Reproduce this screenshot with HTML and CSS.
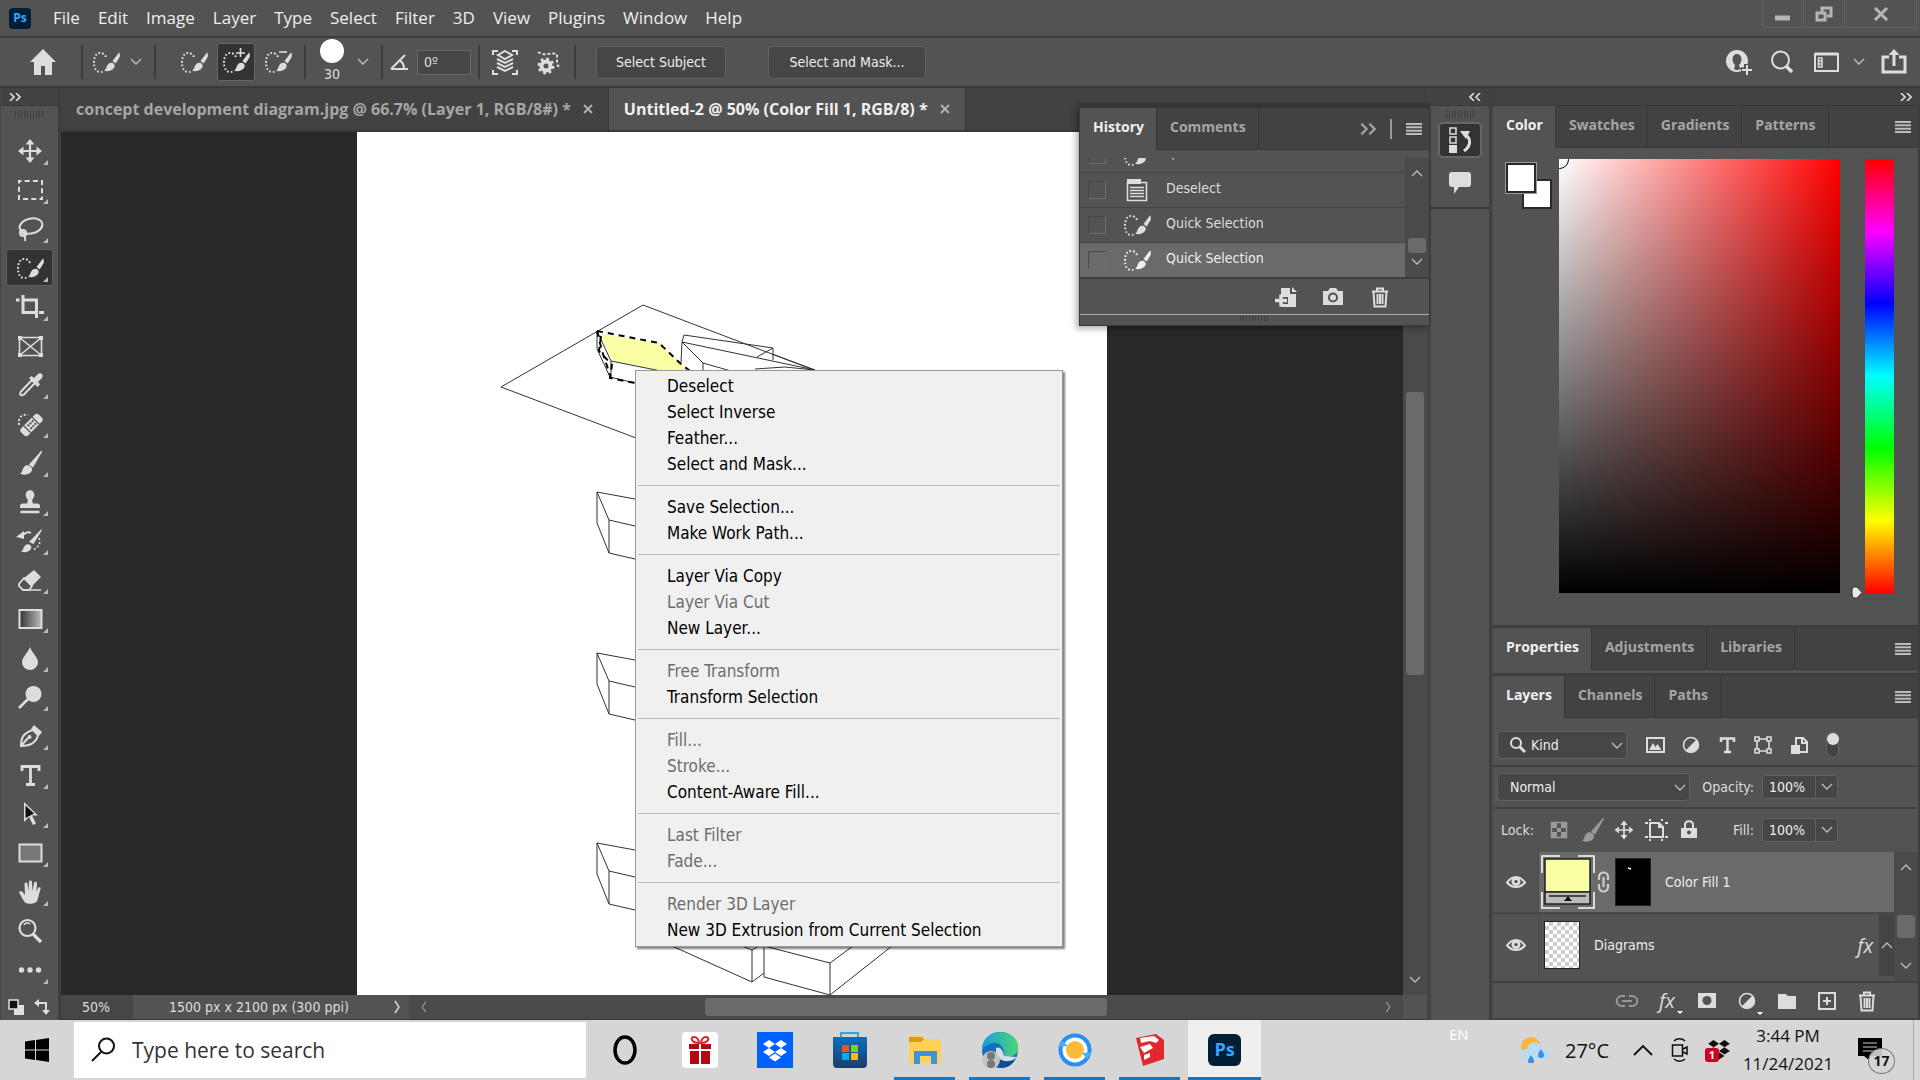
FILE: index.html
```
<!DOCTYPE html>
<html lang="en">
  <head>
    <meta charset="UTF-8" />
    <meta name="viewport" content="width=device-width, initial-scale=1.0" />
    <title>Untitled-2 @ 50% (Color Fill 1, RGB/8)</title>
    <link rel="stylesheet" href="styles.css">
  </head>
  <body>
    <!-- icon sprite -->
    <svg class="sprite" aria-hidden="true">
      <symbol id="chev-down" viewBox="0 0 12 8"><path d="M1 1l5 5 5-5" fill="none" stroke="currentColor" stroke-width="1.4"/></symbol>
      <symbol id="chev-up" viewBox="0 0 12 8"><path d="M1 7l5-5 5 5" fill="none" stroke="currentColor" stroke-width="1.4"/></symbol>
      <symbol id="chev-right" viewBox="0 0 8 14"><path d="M2 1l4 6-4 6" fill="none" stroke="currentColor" stroke-width="1.4"/></symbol>
      <symbol id="chev-left" viewBox="0 0 8 14"><path d="M6 1L2 7l4 6" fill="none" stroke="currentColor" stroke-width="1.4"/></symbol>
      <symbol id="double-right" viewBox="0 0 12 8"><path d="M1 0l4 4-4 4M7 0l4 4-4 4" fill="none" stroke="currentColor" stroke-width="1.6"/></symbol>
      <symbol id="double-left" viewBox="0 0 12 8"><path d="M5 0L1 4l4 4M11 0L7 4l4 4" fill="none" stroke="currentColor" stroke-width="1.6"/></symbol>
      <symbol id="burger" viewBox="0 0 16 12"><path d="M0 1h16M0 4.300h16M0 7.700h16M0 11h16" stroke="currentColor" stroke-width="2"/></symbol>
      <symbol id="quick" viewBox="0 0 28 28">
        <path d="M14 9c-1-3-4-4-6-4-4 0-6 4-6 9.500S4 24 8 24c2 0 3-.5 4-1" fill="none" stroke="currentColor" stroke-width="2" stroke-dasharray="1.700 2"/>
        <path d="M12 22.500c2-.5 2-3 3.500-5.500s5-3 6.500-1 .5 4.500-2.500 6-5.500 1.500-7.500.5z" fill="currentColor"/>
        <path d="M20.500 13L27 4.500c1 0 1 4 .4 5L23.600 15.500z" fill="currentColor"/>
      </symbol>
      <symbol id="brush" viewBox="0 0 28 28">
        <path d="M4 24.500c2.500-1 2-4 4-6.500s6-2 7.500.5 0 5-3.500 6.500-6 .5-8-.5z" fill="currentColor"/>
        <path d="M13 15.500L25.500 1.500 26 3 17 18.500z" fill="currentColor"/>
      </symbol>
      <symbol id="move" viewBox="0 0 28 28">
        <path d="M14 5v18M5 14h18" stroke="currentColor" stroke-width="2.200"/>
        <path d="M14 2l4.500 5.500h-9zM14 26l4.500-5.500h-9zM2 14l5.500-4.500v9zM26 14l-5.500-4.500v9z" fill="currentColor"/>
      </symbol>
      <symbol id="marquee" viewBox="0 0 28 28"><rect x="3" y="5" width="23" height="18" fill="none" stroke="currentColor" stroke-width="2" stroke-dasharray="5 3.200" stroke-dashoffset="2.500"/></symbol>
      <symbol id="lasso" viewBox="0 0 28 28"><g fill="none" stroke="currentColor" stroke-width="2"><ellipse cx="15" cy="11" rx="11.500" ry="7.500" transform="rotate(-12 15 11)"/><circle cx="7" cy="18" r="3"/><path d="M4 17c4 4 8 1 5 4-1 1 1 2 0 5"/></g></symbol>
      <symbol id="crop" viewBox="0 0 28 28"><path d="M0 7h3.500M7 2v17.500h13M23 19.500h5M8 7h12.500v18" fill="none" stroke="currentColor" stroke-width="3"/></symbol>
      <symbol id="frame" viewBox="0 0 28 28"><path d="M3.500 5.500h22v18h-22zM3.500 5.500l22 18M25.500 5.500l-22 18" fill="none" stroke="currentColor" stroke-width="1.600"/><path d="M2 4h4v4H2zM23 4h4v4h-4zM2 21h4v4H2zM23 21h4v4h-4z" fill="currentColor"/></symbol>
      <symbol id="dropper" viewBox="0 0 28 28"><path d="M16 9l3 3L8 23.500c-3 2-5 0-3-3z" fill="none" stroke="currentColor" stroke-width="2"/><path d="M13 7l2.500-2 2.500 2 4-4c3-2 6 1 4 4l-4 4 2 2.500-2.500 2.500z" fill="currentColor"/></symbol>
      <symbol id="heal" viewBox="0 0 28 28"><path d="M3 15c-1-8 3-11 9-10" fill="none" stroke="currentColor" stroke-width="2" stroke-dasharray="2 2"/><g transform="rotate(-45 15.500 15)"><rect x="3" y="10" width="25" height="10" rx="3" fill="currentColor"/><path d="M9.500 10v10M21.500 10v10" stroke="#535353" stroke-width="1.200"/><path d="M12 13h8M12 17h8" stroke="#535353" stroke-width="2" stroke-dasharray="2 1"/></g></symbol>
      <symbol id="stamp" viewBox="0 0 28 28"><path d="M14 2a5 5 0 0 1 3 8.500c-1 1-1 3 0 5h4c2 0 3 1 3 3V20H4v-1.500c0-2 1-3 3-3h4c1-2 1-4 0-5A5 5 0 0 1 14 2z" fill="currentColor"/><path d="M4.500 24h19" stroke="currentColor" stroke-width="2.500"/></symbol>
      <symbol id="history-brush" viewBox="0 0 28 28"><path d="M5 24.500c2.500-1 2-4 4-6s5-1.500 6 .5 0 4-3 5.500-5 .5-7 0zM13 15L25.500 2v2L17.500 17zM0 10l8-6v8z" fill="currentColor"/><path d="M7 8c3-3 6-3 8-2" fill="none" stroke="currentColor" stroke-width="2"/><path d="M23 11c2 5 0 9-6 12" fill="none" stroke="currentColor" stroke-width="1.600" stroke-dasharray="2 2"/></symbol>
      <symbol id="eraser" viewBox="0 0 28 28"><path d="M18 4l7 7-9 9-8-8z" fill="currentColor"/><path d="M8 12l8 8-3 4H7l-4-4v-2z" fill="none" stroke="currentColor" stroke-width="1.800"/><path d="M8 24h17" stroke="currentColor" stroke-width="1.500"/></symbol>
      <symbol id="gradient" viewBox="0 0 28 28"><linearGradient id="gr"><stop stop-color="#333"/><stop offset="1" stop-color="#bbb"/></linearGradient><rect x="3.500" y="5" width="22" height="18" fill="url(#gr)" stroke="currentColor" stroke-width="2"/></symbol>
      <symbol id="drop" viewBox="0 0 28 28"><path d="M14 3c2 6 8 10 8 15.500a8 7.500 0 0 1-16 0C6 13 12 9 14 3z" fill="currentColor"/></symbol>
      <symbol id="dodge" viewBox="0 0 28 28"><circle cx="17.500" cy="11" r="8" fill="currentColor"/><path d="M12 16l-9 9" stroke="currentColor" stroke-width="2.600"/></symbol>
      <symbol id="pen" viewBox="0 0 28 28"><path d="M5 24c0-8 2-13 12-16l5 5c-2 9-9 11-17 11zM5 24l7-8" fill="none" stroke="currentColor" stroke-width="2"/><circle cx="13.500" cy="15" r="2" fill="currentColor"/><path d="M18 3l8 7-3 4-8-7z" fill="currentColor"/></symbol>
      <symbol id="type" viewBox="0 0 28 28"><path d="M6 10V5.500h17V10M14.500 5v18M10 23.500h9" fill="none" stroke="currentColor" stroke-width="2.800"/></symbol>
      <symbol id="arrow" viewBox="0 0 28 28"><path d="M8 2v20l5-5 4 8 3-1.500-4-8h6z" fill="currentColor"/><path d="M9.500 5.500v12.500l8.500-4.500z" fill="#111"/></symbol>
      <symbol id="rect" viewBox="0 0 28 28"><rect x="3.500" y="5.500" width="22" height="17" fill="#777" stroke="currentColor" stroke-width="2"/></symbol>
      <symbol id="hand" viewBox="0 0 28 28"><path d="M9 24.500c-2-2-4-7-6-10 1-2 3-1 4 0l2 2.500L8.500 6c0-2 3-2 3 0l1 7 .5-9c0-2 3-2 3 0l.5 9 1.500-8c.5-2 3-1.500 3 .5l-.5 8.500 1.500-4c1-1.500 3-1 2.500 1l-3 11c-1 4-9 5-12.500 2.500z" fill="currentColor"/></symbol>
      <symbol id="zoom" viewBox="0 0 28 28"><circle cx="11.500" cy="11" r="8" fill="none" stroke="currentColor" stroke-width="2.200"/><path d="M8 8c1-2 4-3 6-1" fill="none" stroke="currentColor" stroke-width="1.500"/><path d="M17 17l8 8" stroke="currentColor" stroke-width="3.200"/></symbol>
      <symbol id="dots" viewBox="0 0 28 28"><g fill="currentColor"><circle cx="5.500" cy="14" r="2.700"/><circle cx="14" cy="14" r="2.700"/><circle cx="22.500" cy="14" r="2.700"/></g></symbol>
      <symbol id="trash" viewBox="0 0 28 28"><path d="M6 8.500h16M11 8V5.500h6V8M7.500 9l1 14.500h11l1-14.500M11.500 11v10M14 11v10M16.500 11v10" fill="none" stroke="currentColor" stroke-width="2"/></symbol>
      <symbol id="eye" viewBox="0 0 28 28"><path d="M5 14.500c5-7.500 13-7.500 18 0-5 6-13 6-18 0z" fill="none" stroke="currentColor" stroke-width="2"/><circle cx="14" cy="13.500" r="4.500" fill="currentColor"/><circle cx="14" cy="13.500" r="1.600" fill="#444"/></symbol>
      <symbol id="adjust" viewBox="0 0 28 28"><circle cx="14" cy="14" r="7.500" fill="none" stroke="currentColor" stroke-width="1.600"/><path d="M8.500 19.500A7.800 7.800 0 0 0 19.500 8.500z" fill="currentColor"/></symbol>
      <symbol id="dropbox" viewBox="0 0 24 22"><path d="M6 0l6 4-6 4-6-4zM18 0l6 4-6 4-6-4zM6 8l6 4-6 4-6-4zM18 8l6 4-6 4-6-4zM12 13.500l6 4-6 4-6-4z" fill="currentColor"/></symbol>
    </svg>

    <header class="title-bar">
      <span class="ps-logo">Ps</span>
      <nav class="menu-bar">
        <button>File</button>
        <button>Edit</button>
        <button>Image</button>
        <button>Layer</button>
        <button>Type</button>
        <button>Select</button>
        <button>Filter</button>
        <button>3D</button>
        <button>View</button>
        <button>Plugins</button>
        <button>Window</button>
        <button>Help</button>
      </nav>
      <div class="window-buttons">
        <button aria-label="Minimize"><svg width="16" height="16"><path d="M0 12h15" stroke="currentColor" stroke-width="5"/></svg></button>
        <button aria-label="Restore"><svg width="18" height="16"><path d="M7 6V2h9v8h-4M2 7h8v7H2z" fill="none" stroke="currentColor" stroke-width="3"/></svg></button>
        <button aria-label="Close" class="close"><svg width="16" height="14"><path d="M2 1l12 12M14 1L2 13" stroke="currentColor" stroke-width="3"/></svg></button>
      </div>
    </header>

    <div class="options-bar">
      <button class="home" aria-label="Home"><svg width="26" height="26"><path d="M13 0L0 13h4v13h7v-9h4v9h7V13h4z" fill="currentColor"/></svg></button>
      <div class="option-group preset">
        <svg class="icon"><use href="#quick"/></svg>
        <svg class="chev"><use href="#chev-down"/></svg>
      </div>
      <div class="option-group modes">
        <button aria-label="New selection"><svg class="icon"><use href="#quick"/></svg></button>
        <button aria-label="Add to selection" class="active"><svg class="icon"><use href="#quick"/><path d="M14 5h9M18.500 0v9" stroke="currentColor" stroke-width="1.600"/></svg></button>
        <button aria-label="Subtract from selection"><svg class="icon"><use href="#quick"/><path d="M15 4h8" stroke="currentColor" stroke-width="1.600"/></svg></button>
      </div>
      <div class="option-group brush-size">
        <div class="brush-preview"><i></i><span>30</span></div>
        <svg class="chev"><use href="#chev-down"/></svg>
      </div>
      <div class="option-group angle">
        <label for="angle" aria-label="Angle"><svg width="20" height="18"><path d="M2 16h17M2 16L16 2M10 7c4 2 5 5 5 9" fill="none" stroke="currentColor" stroke-width="2"/></svg></label>
        <input id="angle" type="text" value="0º">
      </div>
      <div class="option-group sampling">
        <svg class="icon" viewBox="0 0 28 28"><path d="M2 7V3h5M21 3h5v4M2 22v4h5M21 26h5v-4" fill="none" stroke="currentColor" stroke-width="2"/><path d="M14 3l7 4-7 4-7-4zM6 11l8 4 8-4M6 15l8 4 8-4M6 19l8 4 8-4" fill="none" stroke="currentColor" stroke-width="2"/></svg>
        <svg class="icon" viewBox="0 0 28 28"><circle cx="10" cy="18" r="4.500" fill="none" stroke="currentColor" stroke-width="4"/><circle cx="10" cy="18" r="7" fill="none" stroke="currentColor" stroke-width="3" stroke-dasharray="2.700 2.800"/><path d="M2 4c8 5 10 0 19 2v9c0 3 2 4 4 4" fill="none" stroke="currentColor" stroke-width="2" stroke-dasharray="3 2"/></svg>
      </div>
      <button class="big-btn">Select Subject</button>
      <button class="big-btn mask-btn">Select and Mask...</button>
      <div class="share-tools">
        <button aria-label="Invite"><svg class="icon" viewBox="0 0 28 28"><circle cx="13" cy="13" r="10" fill="none" stroke="currentColor" stroke-width="2"/><path d="M13 3C5 3 1 10 4 16c1 3 4 5 6 6l1-5C7 13 8 6 13 6s6 7 2 11l1 3 5-1C26 12 22 3 13 3z" fill="currentColor"/><path d="M17 22h11M22.500 16v12" stroke="#535353" stroke-width="5"/><path d="M18 22h10M23 17v10" stroke="currentColor" stroke-width="2"/></svg></button>
        <button aria-label="Search"><svg class="icon" viewBox="0 0 28 28"><circle cx="12.500" cy="12" r="8.500" fill="none" stroke="currentColor" stroke-width="2"/><path d="M18 18l6 6" stroke="currentColor" stroke-width="3.500"/></svg></button>
        <button aria-label="Workspace" class="workspace-btn"><svg class="icon" viewBox="0 0 28 28"><path d="M3 6h23v17H3z" fill="none" stroke="currentColor" stroke-width="2"/><path d="M3 6h23" stroke="currentColor" stroke-width="3"/><path d="M6.500 10h3.500v9H6.500zM6.500 13h3M6.500 16h3" fill="none" stroke="currentColor" stroke-width="1.500"/></svg><svg class="chev"><use href="#chev-down"/></svg></button>
        <button aria-label="Share"><svg class="icon" viewBox="0 0 28 28"><path d="M9 9H3v15h22V9h-6" fill="none" stroke="currentColor" stroke-width="3"/><path d="M14 6v12" stroke="currentColor" stroke-width="3"/><path d="M14 1l5.500 6h-11z" fill="currentColor"/></svg></button>
      </div>
    </div>

    <main class="workspace">
      <aside class="toolbox">
        <div class="dock-head"><svg class="double"><use href="#double-right"/></svg></div>
        <div class="grip"></div>
        <div class="tools">
          <button aria-label="Move"><svg class="icon"><use href="#move"/></svg></button>
          <button aria-label="Marquee"><svg class="icon"><use href="#marquee"/></svg></button>
          <button aria-label="Lasso"><svg class="icon"><use href="#lasso"/></svg></button>
          <button aria-label="Quick selection" class="active"><svg class="icon"><use href="#quick"/></svg></button>
          <button aria-label="Crop"><svg class="icon"><use href="#crop"/></svg></button>
          <button aria-label="Frame" class="single"><svg class="icon"><use href="#frame"/></svg></button>
          <button aria-label="Eyedropper"><svg class="icon"><use href="#dropper"/></svg></button>
          <button aria-label="Healing brush"><svg class="icon"><use href="#heal"/></svg></button>
          <button aria-label="Brush"><svg class="icon"><use href="#brush"/></svg></button>
          <button aria-label="Clone stamp"><svg class="icon"><use href="#stamp"/></svg></button>
          <button aria-label="History brush"><svg class="icon"><use href="#history-brush"/></svg></button>
          <button aria-label="Eraser"><svg class="icon"><use href="#eraser"/></svg></button>
          <button aria-label="Gradient"><svg class="icon"><use href="#gradient"/></svg></button>
          <button aria-label="Blur"><svg class="icon"><use href="#drop"/></svg></button>
          <button aria-label="Dodge"><svg class="icon"><use href="#dodge"/></svg></button>
          <button aria-label="Pen"><svg class="icon"><use href="#pen"/></svg></button>
          <button aria-label="Type tool"><svg class="icon"><use href="#type"/></svg></button>
          <button aria-label="Path selection"><svg class="icon"><use href="#arrow"/></svg></button>
          <button aria-label="Rectangle"><svg class="icon"><use href="#rect"/></svg></button>
          <button aria-label="Hand"><svg class="icon"><use href="#hand"/></svg></button>
          <button aria-label="Zoom" class="single"><svg class="icon"><use href="#zoom"/></svg></button>
          <button aria-label="Edit toolbar"><svg class="icon"><use href="#dots"/></svg></button>
        </div>
        <div class="tool-colors">
          <svg width="16" height="16"><path d="M6 6h10v10H6z" fill="#e0e0e0"/><path d="M1 1h9v9H1z" fill="#111" stroke="#e0e0e0" stroke-width="1.500"/></svg>
          <svg width="16" height="16"><path d="M4 4h8v8" fill="none" stroke="currentColor" stroke-width="2"/><path d="M0 4l5-4v8zM12 16l-4-5h8z" fill="currentColor"/></svg>
        </div>
      </aside>

      <section class="document">
        <div class="doc-tabs">
          <div class="doc-tab"><span>concept development diagram.jpg @ 66.7% (Layer 1, RGB/8#) *</span><button aria-label="Close tab"><svg width="10" height="10"><path d="M1 1l8 8M9 1L1 9" stroke="currentColor" stroke-width="2"/></svg></button></div>
          <div class="doc-tab active"><span>Untitled-2 @ 50% (Color Fill 1, RGB/8) *</span><button aria-label="Close tab"><svg width="10" height="10"><path d="M1 1l8 8M9 1L1 9" stroke="currentColor" stroke-width="2"/></svg></button></div>
        </div>
        <div class="canvas-row">
          <div class="canvas">
            <svg class="artboard" viewBox="357 132 750 863" preserveAspectRatio="xMidYMin slice">
              <g class="lines">
                <path d="M636 438L501 387 643 305l171 65"/>
                <path d="M597 331v18l13 28 25 6M597 331l14 30v16"/>
                <path class="yellow" d="M600 334l59 9 22 20 9 8h-30l-48-10z"/>
                <path d="M611 361l50 10"/>
                <path d="M681 363l1-21 2-7 89 13v12M682 342l133 28M757 357l16-9M682 342l21 21v8M703 363l28 8M755 369l30-2 30 3M772 354l43 16"/>
                <g id="box"><path d="M635 499l-38-7v31l12 30 26 6M597 492l12 28 26 6M609 520v33"/></g>
                <use href="#box" y="161"/>
                <use href="#box" y="351"/>
                <path d="M672 946l80 36 12-9M742 946l10 4v32M752 950l7-4M764 946v31l66 18 62-49M764 946l66 17v32M830 963l23-17"/>
              </g>
              <g class="ants">
                <path d="M597 331l62 12 22 21 9 7M597 331l5 20 8 24M601 336l-2 15 13 14-2 13 25 5"/>
              </g>
            </svg>
          </div>
          <div class="scrollbar v-scroll">
            <span class="thumb"></span>
            <svg class="chev"><use href="#chev-down"/></svg>
          </div>
        </div>
        <div class="status-bar">
          <span class="zoom-level">50%</span>
          <span class="doc-info">1500 px x 2100 px (300 ppi)<svg width="8" height="16"><use href="#chev-right"/></svg></span>
          <div class="h-scroll">
            <svg width="8" height="12"><use href="#chev-left"/></svg>
            <span class="thumb"></span>
            <svg width="8" height="12"><use href="#chev-right"/></svg>
          </div>
          <span class="corner"></span>
        </div>

        <!-- floating history panel -->
        <div class="history">
          <div class="tabs">
            <button class="tab active">History</button>
            <button class="tab">Comments</button>
            <span class="tab-tools"><svg width="16" height="12"><use href="#double-right"/></svg><i></i><svg class="burger"><use href="#burger"/></svg></span>
          </div>
          <div class="history-body">
            <ul class="history-list">
              <li><input type="checkbox" id="h0"><svg class="icon"><use href="#quick"/></svg><label for="h0">Quick Selection</label></li>
              <li><input type="checkbox" id="h1"><svg class="icon" viewBox="0 0 28 28"><path d="M4 3h14v5H4z" fill="currentColor"/><path d="M4.500 6.500h19v18h-19zM7 11.500h14M7 14.500h14M7 17.500h14M7 20.500h14" fill="none" stroke="currentColor" stroke-width="1.600"/></svg><label for="h1">Deselect</label></li>
              <li><input type="checkbox" id="h2"><svg class="icon"><use href="#quick"/></svg><label for="h2">Quick Selection</label></li>
              <li class="selected"><input type="checkbox" id="h3"><svg class="icon"><use href="#quick"/></svg><label for="h3">Quick Selection</label></li>
            </ul>
            <div class="scrollbar">
              <svg class="chev"><use href="#chev-up"/></svg>
              <span class="thumb"></span>
              <svg class="chev"><use href="#chev-down"/></svg>
            </div>
          </div>
          <div class="history-foot">
            <button aria-label="New document from state"><svg class="icon" viewBox="0 0 28 28"><path d="M9 5h9v6h6v13H9v-3h7v-7H9zM20 4l5 5h-5z" fill="currentColor"/><path d="M3 17.500h12M9 11.500v12" stroke="currentColor" stroke-width="3.500"/></svg></button>
            <button aria-label="New snapshot"><svg class="icon" viewBox="0 0 28 28"><path d="M4 8h5l2-3h6l2 3h5v14H4z" fill="currentColor"/><circle cx="14" cy="14.500" r="4" fill="none" stroke="#535353" stroke-width="2"/></svg></button>
            <button aria-label="Delete state"><svg class="icon"><use href="#trash"/></svg></button>
          </div>
          <div class="resize"></div>
        </div>

        <!-- canvas right-click menu -->
        <div class="context-menu" role="menu">
          <button role="menuitem">Deselect</button>
          <button role="menuitem">Select Inverse</button>
          <button role="menuitem">Feather...</button>
          <button role="menuitem">Select and Mask...</button>
          <hr>
          <button role="menuitem">Save Selection...</button>
          <button role="menuitem">Make Work Path...</button>
          <hr>
          <button role="menuitem">Layer Via Copy</button>
          <button role="menuitem" disabled>Layer Via Cut</button>
          <button role="menuitem">New Layer...</button>
          <hr>
          <button role="menuitem" disabled>Free Transform</button>
          <button role="menuitem">Transform Selection</button>
          <hr>
          <button role="menuitem" disabled>Fill...</button>
          <button role="menuitem" disabled>Stroke...</button>
          <button role="menuitem">Content-Aware Fill...</button>
          <hr>
          <button role="menuitem" disabled>Last Filter</button>
          <button role="menuitem" disabled>Fade...</button>
          <hr>
          <button role="menuitem" disabled>Render 3D Layer</button>
          <button role="menuitem">New 3D Extrusion from Current Selection</button>
        </div>
      </section>

      <aside class="icon-dock">
        <div class="dock-head"><svg class="double"><use href="#double-left"/></svg></div>
        <div class="dock-icons">
          <div class="grip"></div>
          <button aria-label="History" class="active"><svg class="icon" viewBox="0 0 28 28"><path d="M4 2h6v6H4zM4 11h6v6H4z" fill="none" stroke="currentColor" stroke-width="1.500"/><path d="M3 19h8v8H3zM14 5l10 0-4 8z" fill="currentColor"/><path d="M18 8c8 4 7 12 0 17" fill="none" stroke="currentColor" stroke-width="3"/></svg></button>
          <button aria-label="Comments"><svg class="icon" viewBox="0 0 28 28"><path d="M6 3h16a3 3 0 0 1 3 3v9a3 3 0 0 1-3 3H13l-5 7V18H6a3 3 0 0 1-3-3V6a3 3 0 0 1 3-3z" fill="currentColor"/></svg></button>
        </div>
      </aside>

      <aside class="panels">
        <div class="dock-head"><svg class="double"><use href="#double-right"/></svg></div>
        <section class="panel color-panel">
          <div class="tabs">
            <button class="tab active">Color</button>
            <button class="tab">Swatches</button>
            <button class="tab">Gradients</button>
            <button class="tab">Patterns</button>
            <span class="tab-tools"><svg class="burger"><use href="#burger"/></svg></span>
          </div>
          <div class="color-body">
            <div class="swatches"><i class="back"></i><i class="front"></i></div>
            <div class="color-field"><i class="picker"></i></div>
            <div class="hue"><svg class="hue-marker" width="12" height="13"><path d="M2 1h4l5 5.500L6 12H2L1 8V4z" fill="#e8e8e8" stroke="#333"/></svg></div>
          </div>
        </section>
        <section class="panel properties-panel">
          <div class="tabs">
            <button class="tab active">Properties</button>
            <button class="tab">Adjustments</button>
            <button class="tab">Libraries</button>
            <span class="tab-tools"><svg class="burger"><use href="#burger"/></svg></span>
          </div>
        </section>
        <section class="panel layers-panel">
          <div class="tabs">
            <button class="tab active">Layers</button>
            <button class="tab">Channels</button>
            <button class="tab">Paths</button>
            <span class="tab-tools"><svg class="burger"><use href="#burger"/></svg></span>
          </div>
          <div class="layer-row filter-row">
            <div class="select kind">
              <svg class="find" viewBox="0 0 16 16"><circle cx="6" cy="6" r="5" fill="none" stroke="currentColor" stroke-width="2"/><path d="M9.500 9.500L15 15" stroke="currentColor" stroke-width="3"/></svg>
              <select aria-label="Filter layers"><option>Kind</option></select>
              <svg class="chev"><use href="#chev-down"/></svg>
            </div>
            <div class="filters">
              <button aria-label="Pixel layers"><svg class="icon" viewBox="0 0 28 28"><path d="M6 7h17v14H6z" fill="none" stroke="currentColor" stroke-width="2"/><path d="M8 19l4-7 2.500 4 2-3 4 6z" fill="currentColor"/></svg></button>
              <button aria-label="Adjustment layers"><svg class="icon"><use href="#adjust"/></svg></button>
              <button aria-label="Type layers"><svg class="icon" viewBox="0 0 28 28"><path d="M8 11V7.500h13V11M14.500 7v14M11 21h7" fill="none" stroke="currentColor" stroke-width="2.500"/></svg></button>
              <button aria-label="Shape layers"><svg class="icon" viewBox="0 0 28 28"><g fill="none" stroke="currentColor" stroke-width="1.600"><path d="M8 8h12v12H8z"/><path d="M6 6h4v4H6zM18 6h4v4h-4zM6 18h4v4H6zM18 18h4v4h-4z" fill="#535353"/></g></svg></button>
              <button aria-label="Smart objects"><svg class="icon" viewBox="0 0 28 28"><path d="M11 14V7h7l4 4v10h-7M17 7v5h5" fill="none" stroke="currentColor" stroke-width="2"/><path d="M6 14h9v9H6z" fill="currentColor"/></svg></button>
              <button aria-label="Toggle filter" class="toggle"></button>
            </div>
          </div>
          <div class="layer-row blend-row">
            <div class="select blend">
              <select aria-label="Blend mode"><option>Normal</option></select>
              <svg class="chev"><use href="#chev-down"/></svg>
            </div>
            <label for="opacity">Opacity:</label>
            <div class="number"><input id="opacity" type="text" value="100%"><button aria-label="Opacity slider"><svg class="chev"><use href="#chev-down"/></svg></button></div>
          </div>
          <div class="layer-row lock-row">
            <span class="lock-label">Lock:</span>
            <div class="locks">
              <button aria-label="Lock transparency" class="dim"><svg class="icon" viewBox="0 0 28 28"><path d="M6.500 6.500h15v15h-15z" fill="none" stroke="currentColor" stroke-width="1.500"/><path d="M7 7h5v5H7zM16 7h5v5h-5zM12 12h4v4h-4zM7 16h5v5H7zM16 16h5v5h-5z" fill="currentColor"/></svg></button>
              <button aria-label="Lock pixels" class="dim"><svg class="icon"><use href="#brush"/></svg></button>
              <button aria-label="Lock position"><svg class="icon small"><use href="#move"/></svg></button>
              <button aria-label="Lock artboard"><svg class="icon" viewBox="0 0 28 28"><path d="M8 7h9l4 4v10H8zM17 7v4h4" fill="none" stroke="currentColor" stroke-width="2"/><path d="M3 7h3M23 7h3M3 21h3M23 21h3M8 3v2M20 3v2M8 23v2M20 23v2" stroke="currentColor" stroke-width="2"/></svg></button>
              <button aria-label="Lock all"><svg class="icon" viewBox="0 0 28 28"><path d="M10 13V9c0-5 8-5 8 0v4" fill="none" stroke="currentColor" stroke-width="2"/><path d="M6 12h16v10H6z" fill="currentColor"/><circle cx="14" cy="16.500" r="2" fill="#535353"/></svg></button>
            </div>
            <label for="fill">Fill:</label>
            <div class="number"><input id="fill" type="text" value="100%"><button aria-label="Fill slider"><svg class="chev"><use href="#chev-down"/></svg></button></div>
          </div>
          <div class="layers">
            <ul class="layer-list">
              <li class="layer selected">
                <button class="eye" aria-label="Hide Color Fill 1"><svg class="icon"><use href="#eye"/></svg></button>
                <div class="layer-main">
                  <svg class="fill-thumb" width="54" height="54"><path d="M1 18V1h18M37 1h16v17M53 37v16H37M19 53H1V37" fill="none" stroke="#fff" stroke-width="1.500"/><rect x="4" y="4" width="45" height="33" fill="#f9ffa5" stroke="#222" stroke-width="1.500"/><rect x="4" y="37" width="45" height="12" fill="#bbb" stroke="#222" stroke-width="1.500"/><path d="M8 41h37" stroke="#222" stroke-width="1.500"/><path d="M27 41l4 5h-8z" fill="#111"/></svg>
                  <svg class="link" width="13" height="22"><path d="M2 9V6c0-6 9-6 9 0v3M2 13v3c0 6 9 6 9 0v-3M6.500 6v10" fill="none" stroke="#ccc" stroke-width="2.200"/></svg>
                  <svg width="36" height="48"><rect x=".5" y=".5" width="35" height="47" stroke="#222"/><path d="M13 10l3 1" stroke="#fff" stroke-width="1.500"/></svg>
                  <span>Color Fill 1</span>
                </div>
              </li>
              <li class="layer">
                <button class="eye" aria-label="Hide Diagrams"><svg class="icon"><use href="#eye"/></svg></button>
                <div class="layer-main">
                  <i class="checker"></i>
                  <span>Diagrams</span>
                  <em>fx</em>
                  <button class="expand" aria-label="Collapse effects"><svg class="chev"><use href="#chev-up"/></svg></button>
                </div>
              </li>
            </ul>
            <div class="scrollbar">
              <svg class="chev"><use href="#chev-up"/></svg>
              <span class="thumb"></span>
              <svg class="chev"><use href="#chev-down"/></svg>
            </div>
          </div>
          <div class="layers-foot">
            <button aria-label="Link layers" class="dim"><svg class="icon" viewBox="0 0 28 28"><path d="M12 9H9c-7 0-7 10 0 10h3M16 9h3c7 0 7 10 0 10h-3M9 14h10" fill="none" stroke="currentColor" stroke-width="2"/></svg></button>
            <button aria-label="Layer style"><em>fx</em><i class="more"></i></button>
            <button aria-label="Add mask"><svg class="icon" viewBox="0 0 28 28"><path d="M5 6h18v15H5z" fill="currentColor"/><circle cx="14" cy="13.500" r="4.500" fill="#535353"/></svg></button>
            <button aria-label="New adjustment layer"><svg class="icon"><use href="#adjust"/></svg><i class="more"></i></button>
            <button aria-label="New group"><svg class="icon" viewBox="0 0 28 28"><path d="M5 7h8l2 2h8v13H5z" fill="currentColor"/></svg></button>
            <button aria-label="New layer"><svg class="icon" viewBox="0 0 28 28"><path d="M6 6h16v16H6zM14 10v8M10 14h8" fill="none" stroke="currentColor" stroke-width="2"/></svg></button>
            <button aria-label="Delete layer"><svg class="icon"><use href="#trash"/></svg></button>
          </div>
        </section>
      </aside>
    </main>

    <footer class="taskbar">
      <button class="start" aria-label="Start"><svg width="24" height="24"><path d="M0 3.500L10 2v9.500H0zM11 2l13-2v11.500H11zM0 12.500h10V22L0 20.500zM11 12.500h13V24l-13-2z"/></svg></button>
      <div class="search">
        <svg width="24" height="26"><circle cx="15.500" cy="9" r="7.500" fill="none" stroke="#111" stroke-width="2"/><path d="M10 15L1 24" stroke="#111" stroke-width="2"/></svg>
        <input type="text" placeholder="Type here to search" aria-label="Type here to search">
      </div>
      <nav class="apps">
        <button aria-label="Cortana"><svg width="26" height="32"><ellipse cx="13" cy="16" rx="10" ry="13" fill="none" stroke="#000" stroke-width="3.500"/></svg></button>
        <button aria-label="Rewards"><svg width="36" height="36"><rect width="36" height="36" rx="4" fill="#fff"/><path d="M7 12h10v5H7zM19 12h10v5H19zM8 19h9v13H8zM19 19h9v13h-9z" fill="#b3080e"/><path d="M17 11c-8 0-9-6-5-6 3 0 5 3 5 6zM19 11c8 0 9-6 5-6-3 0-5 3-5 6z" fill="none" stroke="#d9262c" stroke-width="2"/></svg></button>
        <button aria-label="Dropbox"><svg width="36" height="36"><path d="M0 0h36v36H0z" fill="#0061fe"/><svg x="6" y="8" width="24" height="22" color="#fff"><use href="#dropbox"/></svg></svg></button>
        <button aria-label="Store"><svg width="36" height="38"><linearGradient id="st" x2="0" y2="1"><stop stop-color="#0c6fb8"/><stop offset="1" stop-color="#1c3d6b"/></linearGradient><path d="M9 7V2h17v5" fill="none" stroke="#2ba7e4" stroke-width="2"/><path d="M1 6h34v27a4 4 0 0 1-4 4H5a4 4 0 0 1-4-4z" fill="url(#st)"/><path d="M10 14h7v7h-7z" fill="#f1511b"/><path d="M19 14h7v7h-7z" fill="#80cc28"/><path d="M10 22h7v7h-7z" fill="#00adef"/><path d="M19 22h7v7h-7z" fill="#fbbc09"/></svg></button>
        <button aria-label="Explorer" class="open"><svg width="34" height="28"><path d="M1 2a2 2 0 0 1 2-2h11l3 3h14a2 2 0 0 1 2 2v22H1z" fill="#ffd058"/><path d="M1 5V1h12l3 2-3 3H1z" fill="#dd9b12"/><path d="M6 28V15h23v13h-6v-8H12v8z" fill="#3b94d9"/></svg></button>
        <button aria-label="Edge" class="open"><svg width="36" height="36"><linearGradient id="ed"><stop stop-color="#1a9be0"/><stop offset="1" stop-color="#4bd673"/></linearGradient><circle cx="18" cy="18" r="18" fill="#1470bd"/><path d="M0 19C0 5 10 0 19 0c11 0 19 9 17 18-1 6-9 8-14 6 1-7-3-13-9-13S2 14 0 19z" fill="url(#ed)"/><path d="M14 22c0 6 7 9 19 6-3 5-8 8-14 8-6-2-8-9-5-14z" fill="#0f4b93"/><path d="M14 16c4-2 7 2 8 8l13 1-4 3c-8 3-15 0-17-7z" fill="#d8dde0"/><circle cx="9" cy="28" r="9" fill="#c4c4c4"/><circle cx="9" cy="24" r="4" fill="#777"/><circle cx="9" cy="32" r="4" fill="#777"/></svg></button>
        <button aria-label="Sync" class="open"><svg width="34" height="34"><circle cx="17" cy="17" r="14.500" fill="#fff" stroke="#2c8ef0" stroke-width="4"/><circle cx="17" cy="17" r="9" fill="#ffb938"/><path d="M0 14l4-6 6 5zM34 19l-5 7-5-6z" fill="#45b3f7"/></svg></button>
        <button aria-label="SketchUp" class="open"><svg width="30" height="34"><path d="M1 5L21 1l8 6v19L8 33z" fill="#e2272d"/><path d="M5 5l14-2 5 4-3 3-6-2-9 2zM5 14l10-3 3 4-9 5zM9 22l6-2v4l-6 3z" fill="#fff"/></svg></button>
        <button aria-label="Photoshop" class="open current"><span class="ps-logo large">Ps</span></button>
      </nav>
      <span class="lang">EN</span>
      <div class="tray">
        <button class="weather"><svg width="32" height="26"><circle cx="12" cy="10" r="10" fill="#f6b73c"/><path d="M8 22C-2 22 0 11 8 12c2-9 15-8 15 0 10-1 11 10 2 10z" fill="#b9dcf6"/><path d="M12 18c2 3 3 4 3 6a3 3 0 0 1-6 0c0-2 1-3 3-6zM22 12c2 3 3 4 3 6a3 3 0 0 1-6 0c0-2 1-3 3-6z" fill="#3b8fe0"/></svg><span>27°C</span></button>
        <button aria-label="Show hidden icons"><svg width="20" height="12"><path d="M1 11l9-9 9 9" fill="none" stroke="#111" stroke-width="1.800"/></svg></button>
        <button aria-label="Meet now"><svg width="18" height="24"><path d="M1.500 7h10v11h-10zM12 11l4-2v7l-4-2M3 3c3-3 8-3 11 0M3 21c3 3 8 3 11 0" fill="none" stroke="#111" stroke-width="1.500"/></svg></button>
        <button aria-label="Dropbox, 1 notification" class="tray-dropbox"><svg width="24" height="20"><use href="#dropbox"/></svg><b>1</b></button>
        <div class="clock"><span>3:44 PM</span><span>11/24/2021</span></div>
        <button aria-label="Notifications" class="notify"><svg width="24" height="24"><path d="M0 0h24v18H12v5l-6-5H0z"/><path d="M5 5h14M5 9h14M5 13h14" stroke="#ccc" stroke-width="1.200"/></svg><b>17</b></button>
      </div>
    </footer>
  </body>
</html>
```

FILE: styles.css
```
* {
  margin: 0;
  padding: 0;
  box-sizing: border-box;
}

body {
  font-family: "DejaVu Sans Condensed", "Noto Sans", sans-serif;
  font-size: 14px;
  color: #ddd;
  background: #535353;
  display: flex;
  flex-direction: column;
  height: 100vh;
  overflow: hidden;
}

button,
input,
select {
  font: inherit;
  color: inherit;
  background: none;
  border: none;
  border-radius: 0;
  outline: none;
}

button {
  display: flex;
  align-items: center;
  justify-content: center;
}

ul {
  list-style: none;
}

svg {
  display: block;
  flex: none;
}

.sprite {
  position: absolute;
  width: 0;
  height: 0;
}

.icon {
  width: 28px;
  height: 28px;
}

.icon.small {
  width: 22px;
  height: 22px;
  margin: 0 2px;
}

.chev {
  width: 12px;
  height: 8px;
  color: #bbb;
}

.double {
  width: 12px;
  height: 8px;
}

.burger {
  width: 16px;
  height: 12px;
  color: #bbb;
}

.dim {
  color: #999;
}

/* title bar */
.title-bar {
  display: flex;
  flex: none;
  align-items: center;
  height: 37px;
  padding-left: 9px;
  border-bottom: 1px solid #383838;
}

.ps-logo {
  width: 22px;
  height: 21px;
  border-radius: 4px;
  background: #001e36;
  color: #31a8ff;
  font: bold 12px/20px "Open Sans", sans-serif;
  text-align: center;
}

.menu-bar {
  display: flex;
  flex: 1;
  gap: 18px;
  margin-left: 22px;
  font-family: "Open Sans", sans-serif;
  font-size: 17px;
  line-height: 22px;
  color: #eee;
}

.window-buttons {
  display: flex;
  align-self: flex-start;
  height: 28px;
  margin-right: 3px;
  border: 1px solid #626262;
  border-top: none;
  border-radius: 0 0 4px 4px;
  color: #b5b5b5;
}

.window-buttons button {
  width: 41px;
  border-right: 1px solid #626262;
}

.window-buttons .close {
  width: 71px;
  border-right: none;
}

/* tool options */
.options-bar {
  display: flex;
  flex: none;
  align-items: center;
  height: 51px;
  border-top: 1px solid #444;
  border-bottom: 2px solid #3a3a3a;
}

.home {
  width: 81px;
  padding-left: 4px;
}

.option-group {
  display: flex;
  align-items: center;
  height: 34px;
  border-left: 2px solid #3c3c3c;
}

.preset {
  gap: 10px;
  width: 73px;
  padding-left: 9px;
}

.modes {
  gap: 4px;
  width: 150px;
  padding-left: 19px;
}

.modes button {
  width: 38px;
  height: 38px;
}

.modes .active {
  background: #333;
  border: 1px solid #666;
  border-radius: 3px;
}

.brush-size {
  gap: 13px;
  width: 77px;
  padding-left: 14px;
}

.brush-preview {
  display: flex;
  flex-direction: column;
  align-items: center;
}

.brush-preview i {
  width: 24px;
  height: 24px;
  border-radius: 50%;
  background: #fff;
}

.brush-preview span {
  line-height: 22px;
}

.angle {
  gap: 8px;
  width: 97px;
  padding-left: 6px;
}

.angle input {
  width: 54px;
  height: 25px;
  padding-left: 6px;
  background: #464646;
  border: 1px solid #6a6a6a;
}

.sampling {
  gap: 17px;
  width: 98px;
  padding-left: 11px;
  border-right: 2px solid #3c3c3c;
}

.big-btn {
  width: 130px;
  height: 33px;
  margin-left: 20px;
  background: #464646;
  border: 1px solid #626262;
  border-radius: 4px;
  color: #eee;
}

.mask-btn {
  width: 158px;
  margin-left: 42px;
}

.share-tools {
  display: flex;
  gap: 16px;
  margin-left: auto;
  margin-right: 12px;
}

.workspace-btn {
  gap: 13px;
  width: 52px;
}

/* workspace */
.workspace {
  display: flex;
  flex: 1;
  min-height: 0;
}

.dock-head {
  display: flex;
  align-items: center;
  height: 18px;
  padding: 0 8px;
  background: #424242;
  border-bottom: 1px solid #383838;
}

.grip {
  width: 29px;
  height: 8px;
  margin: 4px auto;
  background: repeating-linear-gradient(to right, #404040 0 1px, transparent 1px 3px);
}

.toolbox {
  width: 61px;
  border-left: 1px solid #464646;
  border-right: 3px solid #3e3e3e;
}

.tools {
  padding-top: 10px;
}

.tools button {
  position: relative;
  width: 47px;
  height: 37px;
  margin: 0 0 2px 5px;
  border: 1px solid transparent;
  border-radius: 3px;
}

.tools .active {
  background: #333;
  border-color: #606060;
}

.tools button::after {
  content: "";
  position: absolute;
  right: 4px;
  bottom: 3px;
  border-left: 5px solid transparent;
  border-bottom: 5px solid #bbb;
}

.tools .single::after {
  content: none;
}

.tool-colors {
  display: flex;
  gap: 10px;
  padding: 9px 7px 0;
}

.document {
  position: relative;
  display: flex;
  flex-direction: column;
  flex: 1;
  min-width: 0;
  border-right: 4px solid #444;
}

.doc-tabs {
  display: flex;
  flex: none;
  height: 44px;
  background: #424242;
  border-bottom: 2px solid #383838;
}

.doc-tab {
  display: flex;
  align-items: center;
  gap: 12px;
  padding: 0 15px;
  font-family: "Open Sans", sans-serif;
  font-size: 16px;
  font-weight: bold;
  color: #a6a6a6;
  border-right: 1px solid #383838;
}

.doc-tab.active {
  background: #535353;
  color: #f0f0f0;
}

.doc-tab button {
  color: #b0b0b0;
}

.canvas-row {
  display: flex;
  flex: 1;
  min-height: 0;
}

.canvas {
  display: flex;
  justify-content: center;
  flex: 1;
  background: #282828;
}

.artboard {
  height: 100%;
  aspect-ratio: 750 / 863;
  background: #fff;
}

.lines path {
  fill: none;
  stroke: #333;
}

.lines .yellow {
  fill: #f9ffa5;
  stroke: none;
}

.ants path {
  fill: none;
  stroke: #000;
  stroke-width: 2;
  stroke-dasharray: 6 5;
}

.scrollbar {
  display: flex;
  flex-direction: column;
  align-items: center;
  justify-content: space-between;
  width: 24px;
  padding: 11px 0;
  background: #4a4a4a;
}

.thumb {
  width: 18px;
  background: #6a6a6a;
  border-radius: 3px;
}

.v-scroll {
  padding-top: 260px;
}

.v-scroll .thumb {
  height: 283px;
}

.status-bar {
  display: flex;
  flex: none;
  align-items: center;
  height: 25px;
  background: #4a4a4a;
  border-bottom: 1px solid #383838;
}

.zoom-level {
  width: 72px;
  padding-left: 21px;
  line-height: 24px;
  background: #464646;
}

.doc-info {
  display: flex;
  align-items: center;
  justify-content: space-between;
  width: 276px;
  padding: 0 8px 0 36px;
  line-height: 24px;
  background: #535353;
}

.h-scroll {
  display: flex;
  align-items: center;
  justify-content: space-between;
  flex: 1;
  height: 24px;
  padding: 0 11px;
  color: #999;
}

.h-scroll .thumb {
  width: 402px;
  height: 18px;
}

.corner {
  width: 24px;
  height: 24px;
  background: #535353;
}

/* panel tabs */
.tabs {
  display: flex;
  flex: none;
  height: 42px;
  background: #424242;
  font-family: "Open Sans", sans-serif;
  font-weight: bold;
  color: #a6a6a6;
}

.tab {
  padding: 0 12px 5px 13px;
  border-right: 1px solid #383838;
  border-bottom: 1px solid #383838;
}

.tab.active {
  background: #535353;
  color: #f0f0f0;
  border-bottom: none;
}

.tab-tools {
  display: flex;
  align-items: center;
  justify-content: flex-end;
  gap: 14px;
  flex: 1;
  padding-right: 7px;
  border-bottom: 1px solid #383838;
}

.tab-tools i {
  width: 2px;
  height: 20px;
  background: #999;
}

.history {
  position: absolute;
  top: 15px;
  right: -3px;
  width: 351px;
  background: #535353;
  border: 1px solid #383838;
  border-top: 5px solid #363636;
  box-shadow: -3px 3px 6px rgba(0, 0, 0, 0.3);
}

.history-body {
  display: flex;
  height: 119px;
  margin-top: 8px;
}

.history-list {
  display: flex;
  flex-direction: column;
  justify-content: flex-end;
  flex: 1;
  overflow: hidden;
}

.history-list li {
  display: flex;
  align-items: center;
  flex: none;
  gap: 10px;
  height: 35px;
  padding-left: 8px;
  border-top: 1px solid #444;
}

.history-list .selected {
  background: #6a6a6a;
  color: #eee;
}

.history-list input {
  appearance: none;
  width: 18px;
  height: 18px;
  border: 1px solid #484848;
  border-right-color: #6e6e6e;
  border-bottom-color: #6e6e6e;
}

.history-list label {
  padding: 0 0 5px 5px;
}

.history-list .icon {
  margin-left: 7px;
}

.history .scrollbar .thumb {
  height: 15px;
  margin: auto 0 5px;
}

.history-foot {
  display: flex;
  gap: 19px;
  justify-content: flex-end;
  height: 38px;
  padding-right: 35px;
  border-top: 2px solid #3e3e3e;
  border-bottom: 1px solid #aaa;
}

.resize {
  width: 29px;
  height: 5px;
  margin: 1px auto 4px;
  background: repeating-linear-gradient(to right, #404040 0 1px, transparent 1px 3px);
}

.context-menu {
  position: absolute;
  left: 574px;
  top: 282px;
  width: 428px;
  padding: 2px 2px 3px;
  background: #f0f0f0;
  border: 1px solid #999;
  box-shadow: 2px 2px 2px rgba(0, 0, 0, 0.5);
  font-size: 17px;
  color: #000;
}

.context-menu button {
  width: 100%;
  height: 26px;
  padding-left: 29px;
  justify-content: flex-start;
}

.context-menu button:disabled {
  color: #6d6d6d;
}

.context-menu hr {
  height: 1px;
  margin: 8px 0;
  border: none;
  background: #bbb;
}

/* collapsed dock */
.icon-dock {
  width: 60px;
  border-right: 2px solid #3e3e3e;
}

.icon-dock .dock-head {
  justify-content: flex-end;
}

.dock-icons {
  padding-bottom: 12px;
  border-bottom: 2px solid #383838;
}

.dock-icons button {
  width: 44px;
  height: 36px;
  margin: 0 auto 13px;
}

.dock-icons button + button {
  margin: 0 auto;
  height: 24px;
}

.dock-icons .active {
  background: #333;
  border: 2px solid #666;
  border-radius: 5px;
}

/* right panels */
.panels {
  display: flex;
  flex-direction: column;
  width: 429px;
}

.panels .dock-head {
  flex: none;
  justify-content: flex-end;
}

.panel {
  border-left: 2px solid #464646;
  border-right: 2px solid #3e3e3e;
  border-bottom: 3px solid #3e3e3e;
}

.color-body {
  display: flex;
  height: 477px;
  padding: 11px 24px 32px 13px;
}

.swatches {
  position: relative;
  width: 53px;
}

.swatches i {
  position: absolute;
  width: 30px;
  height: 30px;
  background: #fff;
  border: 2px solid #2a2a2a;
}

.front {
  left: 0;
  top: 4px;
  box-shadow: 0 0 0 1px #999;
}

.back {
  left: 16px;
  top: 20px;
}

.color-field {
  position: relative;
  flex: 1;
  overflow: hidden;
  background: linear-gradient(to top, #000, transparent), linear-gradient(to right, #fff, #f00);
}

.picker {
  position: absolute;
  left: -9px;
  top: -9px;
  width: 19px;
  height: 19px;
  border: 1px solid #000;
  border-radius: 50%;
}

.hue {
  position: relative;
  width: 29px;
  margin-left: 25px;
  background: linear-gradient(#f00, #f0f, #00f, #0ff, #0f0, #ff0, #f00);
}

.hue-marker {
  position: absolute;
  left: -14px;
  bottom: -6px;
}

.properties-panel {
  padding-bottom: 3px;
}

.layers-panel {
  display: flex;
  flex-direction: column;
  flex: 1;
  min-height: 0;
  border-bottom: none;
}

.layer-row {
  display: flex;
  flex: none;
  align-items: center;
  height: 42px;
  padding-left: 4px;
  border-bottom: 2px solid #404040;
}

.filter-row {
  height: 49px;
  padding-top: 7px;
}

.select {
  position: relative;
  height: 28px;
}

.kind {
  width: 130px;
}

.blend {
  width: 193px;
}

.select select {
  appearance: none;
  width: 100%;
  height: 28px;
  padding: 0 12px;
  background: #464646;
  border: 1px solid #626262;
  border-radius: 4px;
  color: #eee;
}

.kind select {
  padding-left: 33px;
}

.find {
  position: absolute;
  left: 13px;
  top: 6px;
  width: 16px;
  height: 16px;
}

.select .chev {
  position: absolute;
  right: 4px;
  top: 11px;
}

.filters {
  display: flex;
  align-items: center;
  gap: 8px;
  margin-left: 14px;
}

.toggle {
  align-items: flex-start;
  width: 13px;
  height: 26px;
  margin-left: 5px;
  background: #444;
  border: 1px solid #666;
  border-radius: 7px;
}

.toggle::before {
  content: "";
  flex: none;
  width: 12px;
  height: 12px;
  border-radius: 50%;
  background: #ddd;
}

.layer-row label {
  width: 72px;
  padding-right: 8px;
  text-align: right;
}

.number {
  display: flex;
  height: 24px;
  border: 1px solid #626262;
  border-radius: 3px;
  background: #464646;
  color: #eee;
}

.number input {
  width: 52px;
  padding-left: 6px;
}

.number button {
  width: 22px;
  border-left: 1px solid #626262;
}

.lock-row {
  height: 43px;
  padding-bottom: 2px;
  border-bottom: none;
}

.lock-label {
  width: 48px;
  padding-left: 4px;
}

.locks {
  display: flex;
  gap: 5px;
  width: 161px;
}

.lock-row label {
  width: 56px;
}

.layers {
  display: flex;
  flex: 1;
  min-height: 0;
}

.layer-list {
  flex: 1;
}

.layer {
  display: flex;
  height: 62px;
  border-bottom: 2px solid #484848;
}

.layer + .layer {
  height: 62px;
  border-bottom: none;
}

.eye {
  width: 46px;
  border-right: 1px solid #484848;
}

.layer-main {
  display: flex;
  align-items: center;
  flex: 1;
  padding-left: 2px;
}

.selected .layer-main {
  background: #6a6a6a;
}

.layer-main span {
  margin-left: 14px;
  color: #eee;
}

.link {
  margin: 0 5px 0 2px;
}

.checker {
  width: 36px;
  height: 48px;
  margin-left: 3px;
  border: 1px solid #222;
  background: repeating-conic-gradient(#ccc 0 25%, #fff 0 50%) 0 0 / 8px 8px;
}

em {
  font-family: "Open Sans", sans-serif;
  font-size: 20px;
}

.layer-main em {
  margin-left: auto;
}

.expand {
  width: 15px;
  height: 62px;
  margin-left: 6px;
  background: #444;
}

.layers .thumb {
  height: 23px;
  margin-top: 20px;
}

.layers-foot {
  display: flex;
  flex: none;
  align-items: center;
  justify-content: flex-end;
  gap: 12px;
  height: 39px;
  padding-right: 37px;
  border-top: 2px solid #404040;
  border-bottom: 2px solid #404040;
}

.layers-foot button {
  position: relative;
  width: 28px;
}

.more {
  position: absolute;
  right: -2px;
  bottom: 0;
  border: 3px solid transparent;
  border-top-color: #fff;
  border-bottom: none;
}

/* windows taskbar */
.taskbar {
  display: flex;
  flex: none;
  align-items: center;
  height: 60px;
  background: #d6d6d6;
  color: #111;
  font-family: "Open Sans", sans-serif;
}

.start {
  width: 74px;
}

.search {
  display: flex;
  align-items: center;
  gap: 17px;
  width: 512px;
  height: 56px;
  padding-left: 17px;
  background: #fff;
}

.search input {
  flex: 1;
  font-size: 21px;
}

.search input::placeholder {
  color: #333;
}

.apps {
  display: flex;
  gap: 2px;
  margin-left: 2px;
}

.apps button {
  width: 73px;
  height: 60px;
}

.apps .open {
  background: linear-gradient(#0a78d0, #0a78d0) center bottom / 61px 3px no-repeat;
}

.apps .current {
  background: linear-gradient(#0a78d0, #0a78d0) center bottom / 73px 3px no-repeat #efefef;
}

.ps-logo.large {
  width: 33px;
  height: 32px;
  border-radius: 6px;
  font-size: 18px;
  line-height: 30px;
}

.lang {
  align-self: flex-start;
  margin: 4px auto 0 188px;
  font-size: 15px;
  color: #fff;
}

.tray {
  display: flex;
  align-items: center;
  height: 60px;
  padding-right: 31px;
  margin-right: 6px;
  border-right: 1px solid #aaa;
}

.weather {
  gap: 14px;
  margin-right: 24px;
  font-size: 20px;
}

.tray button + button {
  margin-right: 18px;
}

.tray .tray-dropbox {
  position: relative;
  margin-right: 7px;
}

.tray-dropbox b {
  position: absolute;
  left: -2px;
  top: 8px;
  width: 14px;
  border-radius: 3px;
  background: #d0021b;
  color: #fff;
  font-size: 11px;
  line-height: 14px;
}

.clock {
  display: flex;
  flex-direction: column;
  align-items: center;
  width: 100px;
  font-size: 17px;
  line-height: 28px;
}

.tray .notify {
  position: relative;
  margin: 0 0 0 20px;
}

.notify b {
  position: absolute;
  left: 10px;
  top: 10px;
  width: 27px;
  height: 26px;
  border: 1px solid #777;
  border-radius: 50%;
  background: rgba(214, 214, 214, 0.9);
  font-size: 14px;
  line-height: 24px;
}
```
